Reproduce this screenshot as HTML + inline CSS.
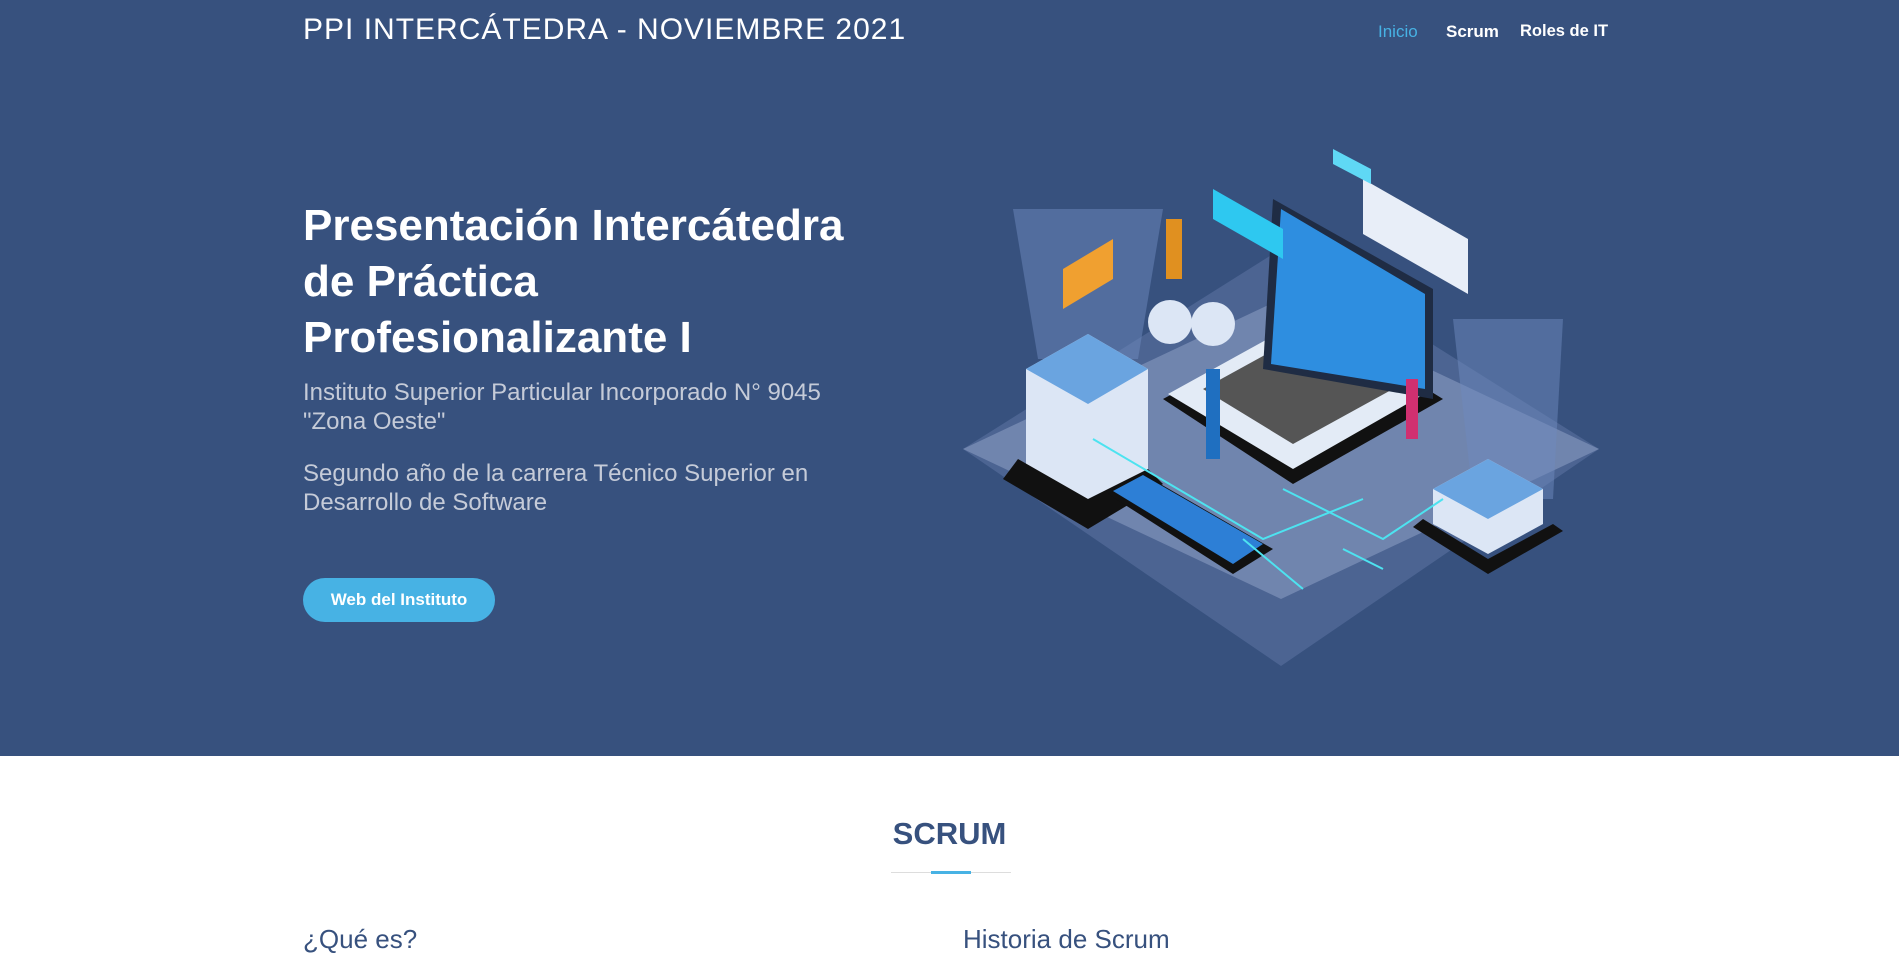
<!DOCTYPE html>
<html><head><meta charset="utf-8"><style>
*{margin:0;padding:0;box-sizing:border-box}
body{width:1899px;height:942px;overflow:hidden;background:#fff;font-family:"Liberation Sans",sans-serif}
.hero{position:absolute;left:0;top:0;width:1899px;height:756px;background:#37517e}
.logo{position:absolute;left:303px;top:13px;color:#fff;font-size:30px;letter-spacing:1px;font-weight:500}
.nav{position:absolute;top:22px;font-size:17px;color:#fff;font-weight:bold}
h1{position:absolute;left:303px;top:198px;width:640px;color:#fff;font-size:44px;line-height:56px;font-weight:bold}
.sub{position:absolute;left:303px;color:#c5cbd8;font-size:24px;line-height:29px;width:600px}
.btn{position:absolute;left:303px;top:578px;width:192px;height:44px;border-radius:22px;background:#47b2e4;color:#fff;font-size:17px;font-weight:bold;text-align:center;line-height:44px}
.h2{position:absolute;left:0;width:1899px;top:816px;text-align:center;color:#37517e;font-size:31px;font-weight:bold}
.h3{position:absolute;top:924px;color:#37517e;font-size:26px}
</style></head><body>
<div class="hero">
<div class="logo">PPI INTERCÁTEDRA - NOVIEMBRE 2021</div>
<div class="nav" style="left:1378px;color:#47b2e4;font-weight:normal">Inicio</div>
<div class="nav" style="left:1446px">Scrum</div>
<div class="nav" style="left:1520px;font-size:16.5px">Roles de IT</div>
<h1>Presentación Intercátedra<br>de Práctica<br>Profesionalizante I</h1>
<div class="sub" style="top:378px">Instituto Superior Particular Incorporado N° 9045<br>"Zona Oeste"</div>
<div class="sub" style="top:459px">Segundo año de la carrera Técnico Superior en<br>Desarrollo de Software</div>
<div class="btn">Web del Instituto</div>
<svg style="position:absolute;left:963px;top:139px" width="636" height="527" viewBox="0 0 636 527">
<polygon points="318,527 0,310 318,110 636,310" fill="#5a72a0" opacity=".6"/>
<polygon points="318,460 0,310 318,160 636,310" fill="#8093bb" opacity=".7"/>
<polygon points="50,70 200,70 175,220 75,220" fill="#6d89bd" opacity=".5"/>
<polygon points="490,180 600,180 590,360 510,360" fill="#6d89bd" opacity=".5"/>
<polygon points="63,230 125,195 185,230 185,330 125,365 63,330" fill="#dce6f5"/>
<polygon points="63,230 125,195 185,230 125,265" fill="#6aa4e0"/>
<polygon points="55,320 125,360 185,330 200,345 125,390 40,340" fill="#111"/>
<polygon points="470,350 525,320 580,350 580,385 525,415 470,385" fill="#dce6f5"/>
<polygon points="470,350 525,320 580,350 525,380" fill="#6aa4e0"/>
<polygon points="460,380 525,420 590,385 600,392 525,435 450,388" fill="#111"/>
<polygon points="200,260 350,180 480,260 330,345" fill="#111"/>
<polygon points="205,255 350,175 470,250 330,330" fill="#e3ebf6"/>
<polygon points="240,250 340,195 430,250 330,305" fill="#555"/>
<polygon points="300,230 310,60 470,150 470,260" fill="#1f2c44"/>
<polygon points="308,225 318,70 462,155 462,250" fill="#2e8ee0"/>
<polygon points="145,355 180,335 310,410 270,435" fill="#111"/>
<polygon points="150,352 180,336 300,405 270,425" fill="#2d7fd6"/>
<polygon points="250,50 320,90 320,120 250,80" fill="#2ec8f0"/>
<polygon points="400,40 505,100 505,155 400,95" fill="#e8eef8"/>
<polygon points="370,10 408,30 408,45 370,25" fill="#5fd8f5"/>
<polygon points="100,130 150,100 150,140 100,170" fill="#f0a030"/>
<circle cx="207" cy="183" r="22" fill="#dce6f5"/><circle cx="250" cy="185" r="22" fill="#dce6f5"/>
<rect x="203" y="80" width="16" height="60" fill="#e09020"/>
<rect x="243" y="230" width="14" height="90" fill="#1f6fc0"/>
<rect x="443" y="240" width="12" height="60" fill="#d03070"/>
<g stroke="#4de3f0" stroke-width="2" fill="none"><path d="M130 300 L300 400 L400 360 M320 350 L420 400 L480 360 M280 400 L340 450 M380 410 L420 430"/></g>
</svg>
</div>
<div class="h2">SCRUM</div>
<div style="position:absolute;left:891px;top:872px;width:120px;height:1px;background:#ddd"></div>
<div style="position:absolute;left:931px;top:871px;width:40px;height:3px;background:#47b2e4"></div>
<div class="h3" style="left:303px">¿Qué es?</div>
<div class="h3" style="left:963px">Historia de Scrum</div>
</body></html>
